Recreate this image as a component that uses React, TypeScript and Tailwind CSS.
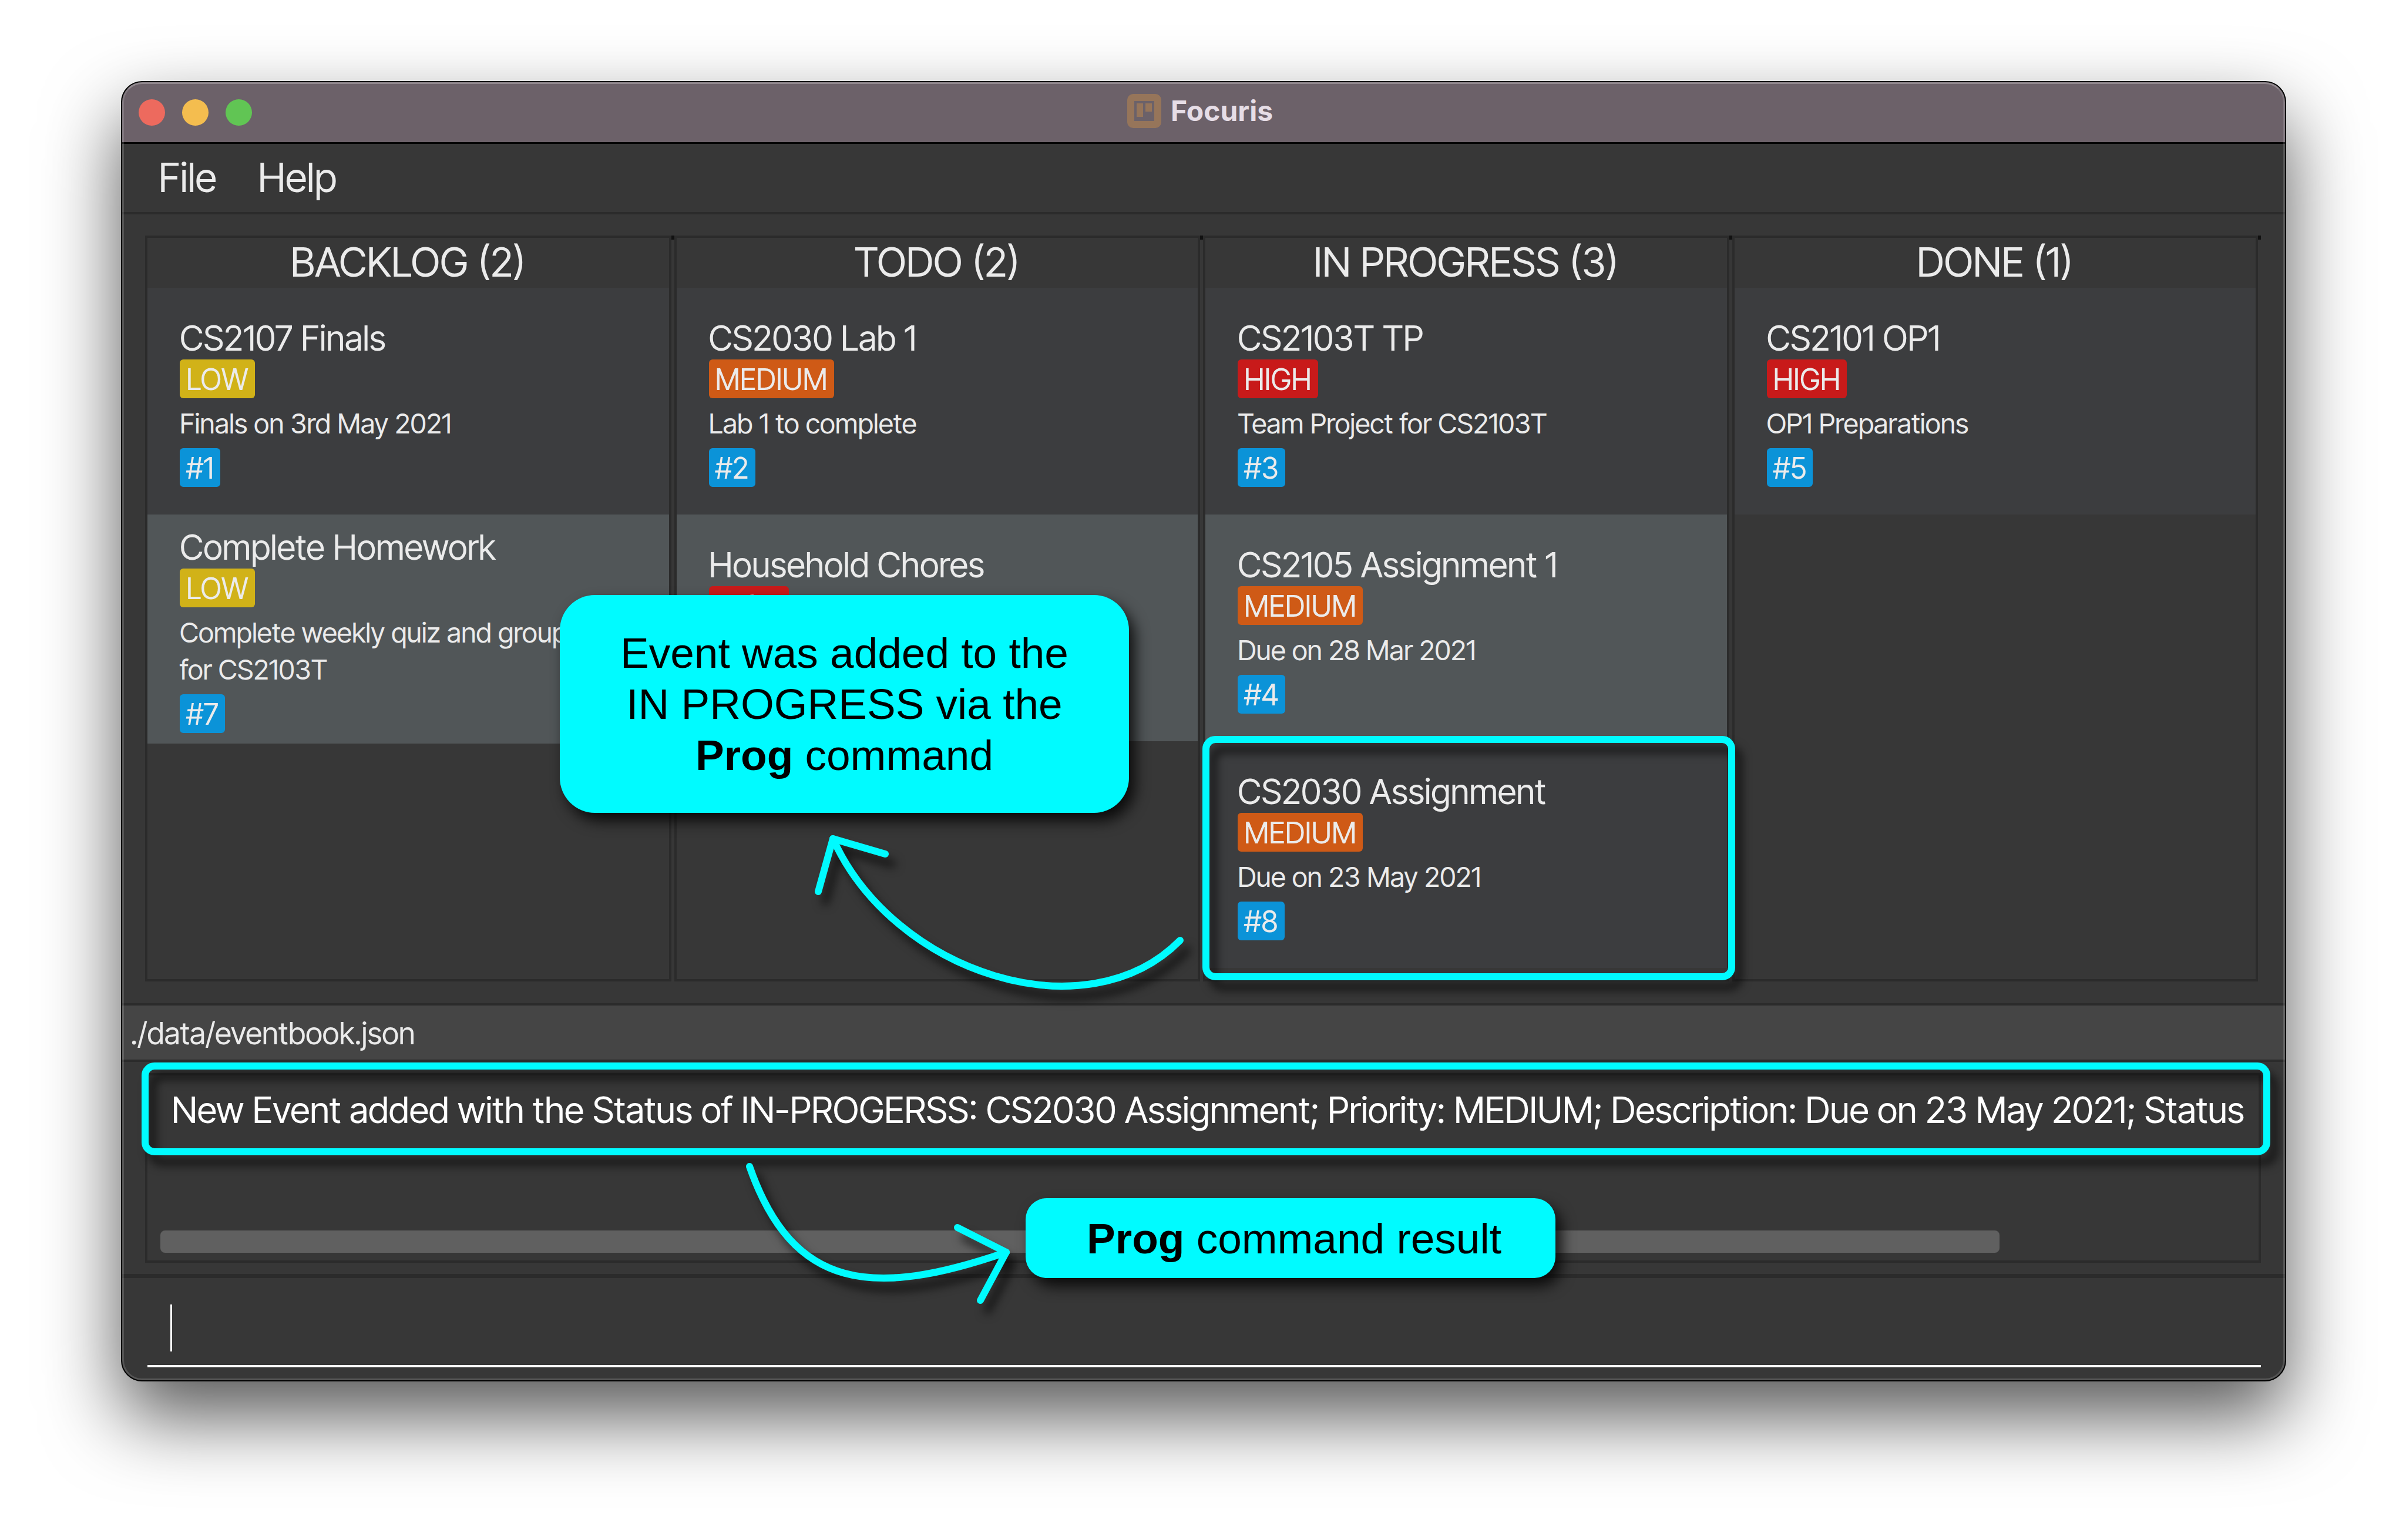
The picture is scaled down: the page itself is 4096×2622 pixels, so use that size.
import React from 'react';

type Priority = 'LOW' | 'MEDIUM' | 'HIGH';

interface EventItem {
  id?: number;
  title: string;
  priority: Priority;
  description: string;
  highlighted?: boolean;
}

interface BoardColumn {
  name: string;
  events: EventItem[];
}

const columns: BoardColumn[] = [
  {
    name: 'BACKLOG',
    events: [
      { id: 1, title: 'CS2107 Finals', priority: 'LOW', description: 'Finals on 3rd May 2021' },
      { id: 7, title: 'Complete Homework', priority: 'LOW', description: 'Complete weekly quiz and group\nfor CS2103T' },
    ],
  },
  {
    name: 'TODO',
    events: [
      { id: 2, title: 'CS2030 Lab 1', priority: 'MEDIUM', description: 'Lab 1 to complete' },
      { title: 'Household Chores', priority: 'HIGH', description: '' },
    ],
  },
  {
    name: 'IN PROGRESS',
    events: [
      { id: 3, title: 'CS2103T TP', priority: 'HIGH', description: 'Team Project for CS2103T' },
      { id: 4, title: 'CS2105 Assignment 1', priority: 'MEDIUM', description: 'Due on 28 Mar 2021' },
      { id: 8, title: 'CS2030 Assignment', priority: 'MEDIUM', description: 'Due on 23 May 2021', highlighted: true },
    ],
  },
  {
    name: 'DONE',
    events: [{ id: 5, title: 'CS2101 OP1', priority: 'HIGH', description: 'OP1 Preparations' }],
  },
];

const priorityColor: Record<Priority, string> = {
  LOW: 'bg-[#d1b218]',
  MEDIUM: 'bg-[#cf5a16]',
  HIGH: 'bg-[#c81a1a]',
};

const highlightFrame =
  'pointer-events-none absolute rounded-[22px] border-[12px] border-[#00fbff] drop-shadow-[12px_17px_8px_rgba(0,0,0,0.65)]';

const calloutStyle =
  "absolute bg-[#00fbff] text-center font-['Liberation_Sans',sans-serif] text-[73px] leading-[87px] text-black shadow-[10px_14px_24px_rgba(0,0,0,0.8)]";

function Badge({ color, children }: { color: string; children: React.ReactNode }) {
  return (
    <span className={`min-h-[66px] w-fit rounded-md px-[11px] pt-0.5 text-[50px] leading-[64px] ${color}`}>
      {children}
    </span>
  );
}

function EventCard({ event, alternate }: { event: EventItem; alternate: boolean }) {
  return (
    <li
      className={`relative flex min-h-[386px] flex-col justify-center py-[18px] pl-[55px] ${
        alternate ? 'bg-[#515658]' : 'bg-[#3c3d3f]'
      }`}
    >
      {event.highlighted && <div className={`${highlightFrame} -top-[9px] -right-[14px] -bottom-[21px] -left-[5px]`} />}
      <h3 className="relative pt-px text-[59px] leading-[73px]">{event.title}</h3>
      <Badge color={priorityColor[event.priority]}>{event.priority}</Badge>
      <p className="my-[11px] min-h-[63px] text-[47px] leading-[63px] whitespace-pre-line">{event.description}</p>
      <Badge color="bg-[#0b93d8]">{event.id !== undefined && `#${event.id}`}</Badge>
    </li>
  );
}

function ColumnGap() {
  return (
    <div className="w-[5px] shrink-0">
      <div className="-mt-1 h-[7px] bg-[#111111]" />
    </div>
  );
}

function BoardIcon() {
  return (
    <svg viewBox="0 0 58 58" className="size-[58px]" aria-hidden="true">
      <rect width="58" height="58" rx="10" fill="#96755a" />
      <rect x="12" y="12" width="34" height="34" fill="#6b6169" />
      <rect x="16" y="16" width="11" height="23" fill="#96755a" />
      <rect x="31" y="16" width="11" height="14" fill="#96755a" />
    </svg>
  );
}

function TitleBar() {
  return (
    <header className="grid h-[105px] grid-cols-[1fr_auto_1fr] items-center rounded-t-[34px] border-b-[3px] border-black bg-[#6c6169] font-['Inter',sans-serif]">
      <div className="flex gap-[29px] pl-7">
        <button aria-label="Close" className="size-[45px] rounded-full bg-[#ed6a5e]" />
        <button aria-label="Minimize" className="size-[45px] rounded-full bg-[#f4bd4f]" />
        <button aria-label="Zoom" className="size-[45px] rounded-full bg-[#61c554]" />
      </div>
      <h1 className="flex items-center gap-4 pr-3 pb-1 text-[48px] leading-[58px] font-bold text-[#e6dde6]">
        <BoardIcon />
        Focuris
      </h1>
    </header>
  );
}

export default function App() {
  return (
    <div className="flex min-h-screen flex-col bg-white pt-[138px] pr-[204px] pb-[270px] pl-[206px] font-['Inter_Tight','Inter',sans-serif] text-[#ebebeb]">
      <main className="relative flex grow flex-col rounded-[36px] border-2 border-black bg-[#373737] shadow-[0_60px_130px_rgba(0,0,0,0.66)]">
        <TitleBar />

        <nav className="flex items-center gap-[70px] border-b-4 border-[#2b2b2b] pt-[18px] pb-5 pl-[62px] text-[68px] leading-[78px]">
          <button>File</button>
          <button>Help</button>
        </nav>

        <section className="mt-9 mr-[41px] mb-[37px] ml-[39px] flex grow border-t-4 border-[#2b2b2b]">
          {columns.map((column) => (
            <React.Fragment key={column.name}>
              <div className="flex min-w-0 flex-1 flex-col border-x-4 border-b-4 border-[#2b2b2b]">
                <h2 className="pb-[3px] text-center text-[69px] leading-[82px]">
                  {column.name} ({column.events.length})
                </h2>
                <ul>
                  {column.events.map((event, row) => (
                    <EventCard key={event.title} event={event} alternate={row % 2 === 1} />
                  ))}
                </ul>
              </div>
              <ColumnGap />
            </React.Fragment>
          ))}
        </section>

        <footer className="border-y-4 border-[#2b2b2b] bg-[#454545] pt-[6px] pb-0.5 pl-[14px] text-[52px] leading-[84px]">
          ./data/eventbook.json
        </footer>

        <section className="border-b-[7px] border-[#2b2b2b] pt-[19px] pr-[41px] pb-[19px] pl-[39px]">
          <div className="relative flex h-[323px] flex-col justify-between border-4 border-[#2b2b2b] pt-[14px] pb-[13px]">
            <div className={`${highlightFrame} -top-[22px] -right-[20px] -left-[10px] h-[158px]`} />
            <p className="relative mr-1 overflow-hidden pl-[41px] text-[62px] leading-[90px] whitespace-nowrap text-white">
              New Event added with the Status of IN-PROGERSS: CS2030 Assignment; Priority: MEDIUM; Description: Due on 23
              May 2021; Status
            </p>
            <div className="mr-[441px] ml-[22px] h-[38px] rounded-lg bg-[#606060]" />
          </div>
        </section>

        <div className="relative mr-[41px] mb-[22px] ml-[43px]">
          <input
            aria-label="Command"
            className="block h-[152px] w-full border-b-4 border-white bg-transparent px-10 text-[62px] caret-transparent outline-none"
          />
          <span className="absolute top-[45px] left-[39px] h-20 w-[3px] bg-white" />
        </div>

        <div className="pointer-events-none absolute inset-0 rounded-[34px] border-[3px] border-white/15 border-t-white/25" />

        <svg
          viewBox="1370 1400 700 340"
          className="pointer-events-none absolute top-[1260px] left-[1162px] h-[340px] w-[700px] overflow-visible drop-shadow-[12px_17px_8px_rgba(0,0,0,0.65)]"
          fill="none"
          stroke="#00fbff"
          strokeWidth="12"
          strokeLinecap="round"
          strokeLinejoin="round"
          aria-hidden="true"
        >
          <path d="M2009 1601C1850 1762 1522 1658 1418 1428" />
          <path d="M1507 1454L1418 1428L1393 1518" />
        </svg>
        <svg
          viewBox="1260 1970 480 270"
          className="pointer-events-none absolute top-[1830px] left-[1052px] h-[270px] w-[480px] overflow-visible drop-shadow-[12px_17px_8px_rgba(0,0,0,0.65)]"
          fill="none"
          stroke="#00fbff"
          strokeWidth="12"
          strokeLinecap="round"
          strokeLinejoin="round"
          aria-hidden="true"
        >
          <path d="M1276 1986C1350 2198 1487 2210 1713 2132" />
          <path d="M1630 2090L1713 2132L1669 2214" />
        </svg>

        <div className={`${calloutStyle} top-[873px] left-[745px] w-[969px] rounded-[60px] py-[55px]`}>
          Event was added to the
          <br />
          IN PROGRESS via the
          <br />
          <b>Prog</b> command
        </div>
        <div className={`${calloutStyle} top-[1900px] left-[1538px] w-[902px] rounded-[36px] pt-[25px] pb-6 pl-3`}>
          <b>Prog</b> command result
        </div>
      </main>
    </div>
  );
}
